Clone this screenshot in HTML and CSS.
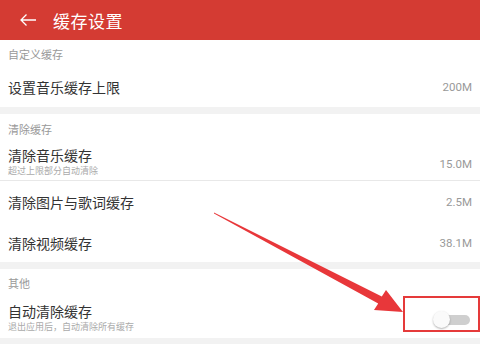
FILE: index.html
```html
<!DOCTYPE html>
<html lang="zh">
<head>
    <meta charset="UTF-8">
    <meta name="viewport" content="width=device-width, initial-scale=1.0">
    <title>缓存设置</title>
    <link rel="stylesheet" href="styles.css">
</head>
<body>
    <div class="topbar">
        <svg class="back" width="18" height="14" viewBox="0 0 18 14">
            <path d="M17 7H2M7.5 1.5L2 7l5.5 5.5" fill="none" stroke="#fff" stroke-width="1.3"/>
        </svg>
        <h1>缓存设置</h1>
    </div>

    <div class="group">
        <div class="group-label">自定义缓存</div>
        <div class="row row-tall">
            <div class="row-title">设置音乐缓存上限</div>
            <div class="row-value">200M</div>
        </div>
    </div>

    <div class="group">
        <div class="group-label label-b">清除缓存</div>
        <div class="row row-sub divided">
            <div>
                <div class="row-title">清除音乐缓存</div>
                <div class="row-desc">超过上限部分自动清除</div>
            </div>
            <div class="row-value">15.0M</div>
        </div>
        <div class="row row-mid">
            <div class="row-title">清除图片与歌词缓存</div>
            <div class="row-value">2.5M</div>
        </div>
        <div class="row">
            <div class="row-title">清除视频缓存</div>
            <div class="row-value">38.1M</div>
        </div>
    </div>

    <div class="group">
        <div class="group-label">其他</div>
        <div class="row row-sub row-last">
            <div>
                <div class="row-title">自动清除缓存</div>
                <div class="row-desc">退出应用后，自动清除所有缓存</div>
            </div>
            <div class="switch"><span class="knob"></span></div>
        </div>
    </div>

    <div class="mark-box"></div>
    <svg class="mark-arrow" width="480" height="344" viewBox="0 0 480 344">
        <polygon points="214,212.5 381.8,296.6 386,290 403,312 374,310 378.2,303.4 214,213.6" fill="#e8373a"/>
    </svg>
</body>
</html>
```

FILE: styles.css
```css
* {
    margin: 0;
    padding: 0;
    box-sizing: border-box;
}

body {
    font-family: 'Noto Sans CJK SC', 'Noto Sans', sans-serif;
    background: #f2f2f2;
    color: #333;
    width: 480px;
    height: 344px;
    overflow: hidden;
    position: relative;
}

.topbar {
    height: 40px;
    background: #d43b33;
    display: flex;
    align-items: center;
    padding-left: 19px;
    gap: 16px;
    color: #fff;
}

.topbar h1 {
    font-size: 17px;
    font-weight: normal;
    letter-spacing: 0.5px;
}

.back {
    margin-top: -1px;
}

.group {
    background: #fff;
    margin-bottom: 7px;
}

.group + .group + .group {
    margin-top: 1px;
}

.group-label {
    height: 26px;
    display: flex;
    align-items: center;
    padding: 2px 8px 0;
    font-size: 11px;
    color: #999;
}

.label-b {
    height: 28px;
}

.row {
    height: 39px;
    display: flex;
    align-items: center;
    justify-content: space-between;
    padding: 0 8px;
}

.row-tall {
    height: 41px;
}

.row-mid {
    height: 42px;
}

.row-sub {
    height: 40px;
}

.row-last {
    height: 43px;
    padding-top: 2px;
}

.divided {
    height: 39px;
    border-bottom: 1px solid #e8e8e8;
}

.row-title {
    font-size: 14px;
    line-height: 18px;
    color: #333;
}

.row-desc {
    font-size: 9px;
    line-height: 12px;
    color: #aaa;
    margin-top: 1px;
}

.row-value {
    font-family: Roboto, 'Noto Sans', sans-serif;
    font-size: 11.5px;
    color: #999;
}

.row-sub .row-value {
    margin-top: 5px;
}

.switch {
    width: 30px;
    height: 10px;
    border-radius: 5px;
    background: #cfcfcf;
    position: relative;
    margin-right: 2px;
    margin-top: 4px;
}

.knob {
    position: absolute;
    left: -7px;
    top: -4px;
    width: 17px;
    height: 17px;
    border-radius: 50%;
    background: #fafafa;
    box-shadow: 0 1px 2px rgba(0, 0, 0, 0.3);
}

.mark-box {
    position: absolute;
    left: 403px;
    top: 296px;
    width: 77px;
    height: 36px;
    border: 2px solid #e53a3a;
}

.mark-arrow {
    position: absolute;
    left: 0;
    top: 0;
}
```
